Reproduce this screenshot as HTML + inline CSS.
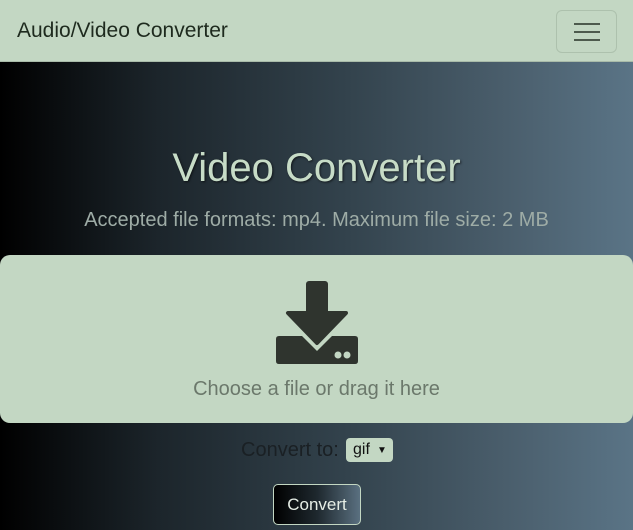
<!DOCTYPE html>
<html><head><meta charset="utf-8"><style>
*{margin:0;padding:0;box-sizing:border-box}
html,body{width:633px;height:530px;overflow:hidden;font-family:"Liberation Sans",sans-serif}
body{background:linear-gradient(90deg,#000 0%,#1c252b 25%,#33434d 55%,#4a5e6c 80%,#5a7486 100%)}
nav{height:62px;background:#c3d7c3;position:relative;border-bottom:1px solid #a9bba9}
nav .brand{position:absolute;left:17px;top:19px;font-size:21px;color:#1e2a1e}
nav .tog{position:absolute;left:556px;top:10px;width:61px;height:43px;border:1px solid #adc1ad;border-radius:6px}
nav .tog i{position:absolute;left:17px;width:26px;height:2px;background:#4d5a4d}
h1{position:absolute;top:146px;width:100%;text-align:center;font-weight:normal;font-size:40px;color:#c7dcc7;text-shadow:1px 1px 2px rgba(0,0,0,.6)}
.sub{position:absolute;top:209px;width:100%;text-align:center;font-size:20px;color:#9eaca6}
.drop{position:absolute;left:0;top:255px;width:633px;height:168px;background:#c3d7c3;border-radius:10px}
.drop p{position:absolute;top:123px;width:100%;text-align:center;font-size:20px;color:#6b786b}
.ct{position:absolute;top:439px;left:241px;font-size:20px;color:#1a2024}
.sel{position:absolute;left:346px;top:438px;width:47px;height:24px;background:#c3d7c3;border-radius:4px;font-size:16px;color:#111;padding:3px 0 0 7px}
.sel span{font-size:10px;position:absolute;left:31px;top:7px}
.btn{position:absolute;left:273px;top:484px;width:88px;height:41px;border:1px solid #c3d7c3;border-radius:5px;background:linear-gradient(90deg,#000,#1e282e 50%,#5a7080);color:#e6eee6;font-size:17px;text-align:center;line-height:39px}
</style></head><body>
<nav><div class="brand">Audio/Video Converter</div><div class="tog"><i style="top:12px"></i><i style="top:20px"></i><i style="top:28px"></i></div></nav>
<h1>Video Converter</h1>
<div class="sub">Accepted file formats: mp4. Maximum file size: 2 MB</div>
<div class="drop">
<svg style="position:absolute;left:274px;top:26px" width="86" height="84" viewBox="0 0 86 84">
<rect x="32" y="0" width="22" height="34" rx="3" fill="#2f342e"/>
<path d="M14 32 H72 L43 62 Z" fill="#2f342e" stroke="#2f342e" stroke-width="4" stroke-linejoin="round"/>
<path d="M2 58 Q2 55 5 55 H28 L43 70 L58 55 H81 Q84 55 84 58 V80 Q84 83 81 83 H5 Q2 83 2 80 Z" fill="#2f342e"/>
<circle cx="64" cy="74" r="3.5" fill="#c3d7c3"/><circle cx="73" cy="74" r="3.5" fill="#c3d7c3"/>
</svg>
<p>Choose a file or drag it here</p></div>
<div class="ct">Convert to:</div>
<div class="sel">gif<span>▼</span></div>
<div class="btn">Convert</div>
</body></html>
